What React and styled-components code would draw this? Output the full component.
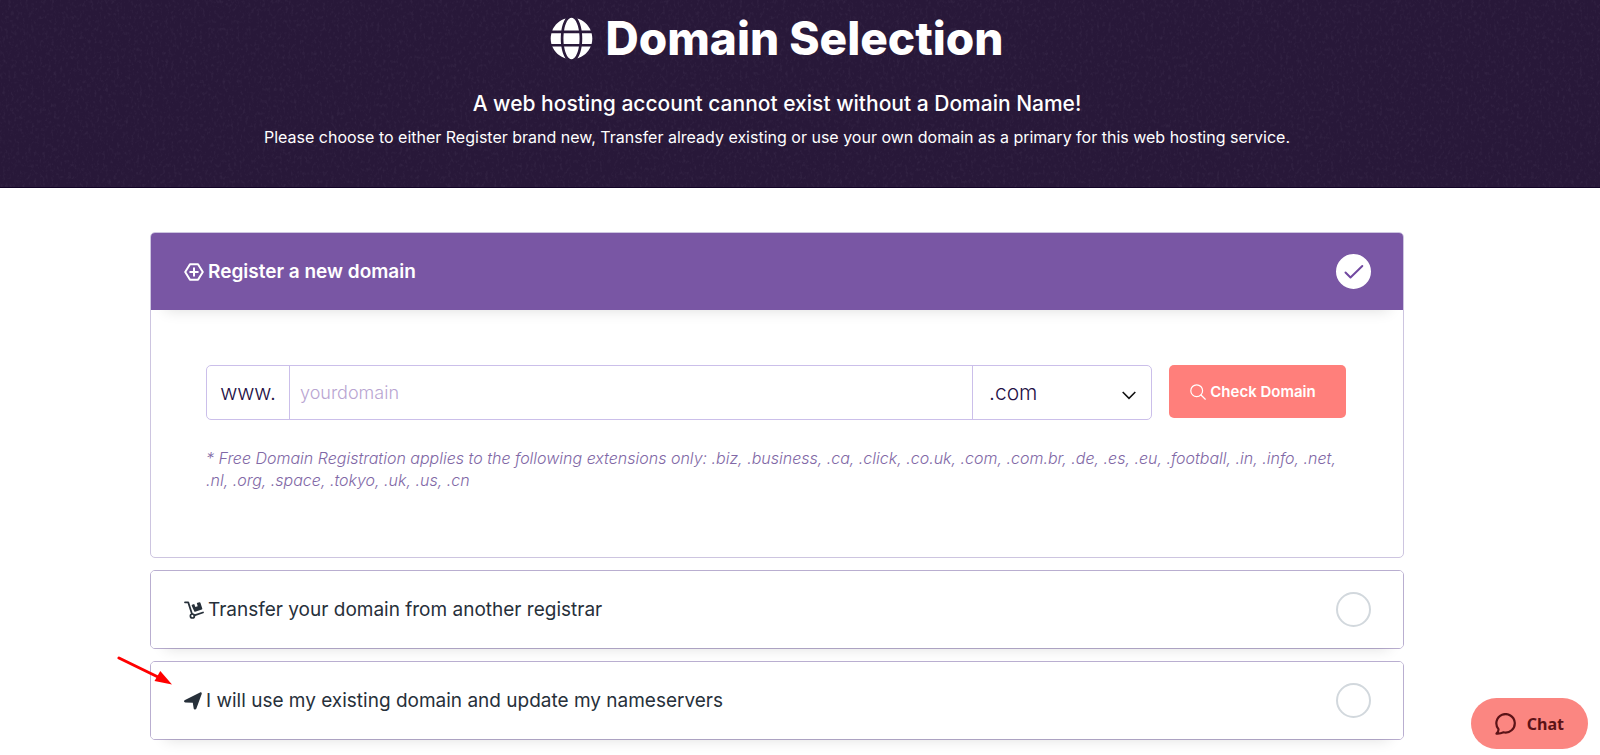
import React, { useState } from 'react'
import styled, { createGlobalStyle } from 'styled-components'
import { FaGlobe } from 'react-icons/fa'

const HexPlusIcon = () => (
  <svg width="20" height="18" viewBox="0 0 20 18" fill="none" stroke="currentColor" strokeLinejoin="round" strokeLinecap="round">
    <path d="M6 1.2h8L18.8 9 14 16.8H6L1.2 9z" strokeWidth="2" />
    <path d="M10 5.2v7.6M6.2 9h7.6" strokeWidth="2" />
  </svg>
)

const TrolleyIcon = () => (
  <svg width="20" height="18" viewBox="0 0 20 18" fill="none" stroke="currentColor" strokeLinejoin="round" strokeLinecap="round">
    <path d="M1 1.3h3.2L8 13" strokeWidth="1.8" />
    <path d="M10.4 14.4l8.6-2.9" strokeWidth="1.8" />
    <circle cx="8.4" cy="15" r="2" strokeWidth="1.7" />
    <path d="M8.1 3.7l2.1-.7 1.2 3.1 2.3-.8-.9-3.2 2.6-.8c.5-.1.9.1 1 .5l1.9 5.7c.1.5-.1.9-.5 1l-6.6 2.2c-.5.1-.9-.1-1-.5L7.700 4.700c-.1-.5 0-.9.4-1z" fill="currentColor" stroke="none" />
  </svg>
)

const PlaneIcon = () => (
  <svg width="18" height="18" viewBox="0 0 18 18" fill="currentColor">
    <path d="M1 8.100L16 .5c1-.5 2 .4 1.700 1.500L12.400 16.600c-.5 1.400-2.400 1.300-2.700-.1l-.9-5.800-7.500-.3C-.2 10.300-.4 8.700 1 8.100z" />
  </svg>
)

const SearchIcon = () => (
  <svg width="16" height="16" viewBox="0 0 16 16" fill="none" stroke="currentColor" strokeWidth="1.2" strokeLinecap="round">
    <circle cx="6.700" cy="6.700" r="5.900" />
    <path d="M11 11l4.300 4.200" />
  </svg>
)

const ChatIcon = () => (
  <svg width="22" height="22" viewBox="0 0 22 22" fill="none" stroke="currentColor" strokeWidth="2.2" strokeLinecap="round" strokeLinejoin="round">
    <path d="M1.500 20.600c1.700-1.600 2.100-2.600 2-4.400A9.200 9.200 0 1 1 8.600 19.300c-2.400 1.100-4.600 1.500-7.100 1.300z" />
  </svg>
)

const OPTIONS = [
  { key: 'register', label: 'Register a new domain', icon: <HexPlusIcon /> },
  { key: 'transfer', label: 'Transfer your domain from another registrar', icon: <TrolleyIcon /> },
  { key: 'existing', label: 'I will use my existing domain and update my nameservers', icon: <PlaneIcon /> },
]

const RegisterForm = () => (
  <StyledForm onSubmit={(e) => e.preventDefault()}>
    <FormRow>
      <InputGroup>
        <Prefix htmlFor="domain">www.</Prefix>
        <DomainInput id="domain" placeholder="yourdomain" />
        <SelectBox>
          <select aria-label="Extension" defaultValue=".com">
            <option>.com</option>
            <option>.net</option>
            <option>.org</option>
          </select>
          <svg width="14" height="9" viewBox="0 0 14 9" fill="none" stroke="#111" strokeWidth="1.6">
            <path d="M.7 1l6.300 6.300L13.300 1" />
          </svg>
        </SelectBox>
      </InputGroup>
      <CheckButton type="submit">
        <SearchIcon />
        Check Domain
      </CheckButton>
    </FormRow>
    <Note>
      * Free Domain Registration applies to the following extensions only: .biz, .business, .ca, .click,
      .co.uk, .com, .com.br, .de, .es, .eu, .football, .in, .info, .net, .nl, .org, .space, .tokyo, .uk,
      .us, .cn
    </Note>
  </StyledForm>
)

export default () => {
  const [selected, setSelected] = useState('register')

  return (
    <>
      <GlobalStyle />
      <Banner>
        <Texture aria-hidden="true">
          <filter id="grain">
            <feTurbulence type="fractalNoise" baseFrequency="0.35 0.25" numOctaves="3" seed="4" />
            <feColorMatrix values="0 0 0 0 0.6  0 0 0 0 0.55  0 0 0 0 0.7  1.6 0 0 0 -0.8" />
          </filter>
          <rect width="100%" height="100%" filter="url(#grain)" />
        </Texture>
        <Title>
          <FaGlobe size={43} />
          Domain Selection
        </Title>
        <Subtitle>A web hosting account cannot exist without a Domain Name!</Subtitle>
        <Lead>
          Please choose to either Register brand new, Transfer already existing or use your own domain as a
          primary for this web hosting service.
        </Lead>
      </Banner>
      <Options>
        {OPTIONS.map(({ key, label, icon }) => (
          <Card key={key} $open={selected === key}>
            <CardHead $active={selected === key}>
              {icon}
              <span>{label}</span>
              <RadioBox>
                <Radio
                  type="radio"
                  name="domain-option"
                  checked={selected === key}
                  onChange={() => setSelected(key)}
                />
                {selected === key && (
                  <svg width="20" height="16" viewBox="0 0 20 16" fill="none" stroke="#7148a0" strokeWidth="2" strokeLinecap="round" strokeLinejoin="round">
                    <path d="M1.500 8.500l5 5L18.300 2" />
                  </svg>
                )}
              </RadioBox>
            </CardHead>
            {selected === key && key === 'register' && <RegisterForm />}
            {key === 'existing' && (
              <Pointer width="56" height="30" viewBox="0 0 56 30" aria-hidden="true">
                <path d="M2 2l39 19" stroke="#f00" strokeWidth="3" strokeLinecap="round" />
                <path d="M55 28.500L37.500 25l5.800-10z" fill="#f00" />
              </Pointer>
            )}
          </Card>
        ))}
      </Options>
      <ChatButton type="button">
        <ChatIcon />
        Chat
      </ChatButton>
    </>
  )
}

const GlobalStyle = createGlobalStyle`
  * {
    box-sizing: border-box;
  }
  body {
    margin: 0;
    background: #fff;
    font-family: Inter, sans-serif;
    color: #212b36;
  }
  button, input, select {
    font-family: inherit;
  }
`

const Banner = styled.header`
  position: relative;
  display: flex;
  flex-direction: column;
  align-items: center;
  padding: 11px 196px 38px 150px;
  background: #281839;
  border-bottom: 1px solid #120326;
  color: #fff;
  text-align: center;
`

const Texture = styled.svg`
  position: absolute;
  inset: 0;
  width: 100%;
  height: 100%;
  opacity: 0.1;
`

const Title = styled.h1`
  position: relative;
  display: flex;
  align-items: center;
  gap: 12px;
  margin: 0 0 25px;
  font-size: 46px;
  line-height: 54px;
  font-weight: 800;
  white-space: nowrap;
`

const Subtitle = styled.h2`
  position: relative;
  margin: 0 0 7px;
  font-size: 21px;
  line-height: 28px;
  font-weight: 500;
`

const Lead = styled.p`
  position: relative;
  margin: 0;
  font-size: 16px;
  line-height: 24px;
`

const Options = styled.main`
  display: flex;
  flex-direction: column;
  gap: 12px;
  padding: 44px 196px 15px 150px;
`

const Card = styled.section`
  position: relative;
  border: 1px solid ${(p) => (p.$open ? '#cdc5e0' : '#b9aed0')};
  border-radius: 5px;
`

const CardHead = styled.label`
  display: flex;
  align-items: center;
  gap: 4px;
  height: 77px;
  padding: 0 32px 0 33px;
  border-radius: ${(p) => (p.$active ? '4px 4px 0 0' : '4px')};
  background: ${(p) => (p.$active ? '#7956a4' : '#fff')};
  box-shadow: 0 14px 14px -14px rgba(0, 0, 0, 0.14);
  color: ${(p) => (p.$active ? '#fff' : '#27303a')};
  font-size: 19px;
  line-height: 24px;
  font-weight: ${(p) => (p.$active ? 600 : 400)};
  cursor: pointer;
  span:first-of-type {
    flex: 1;
  }
`

const RadioBox = styled.span`
  display: grid;
  place-items: center;
  > * {
    grid-area: 1 / 1;
  }
`

const Radio = styled.input`
  appearance: none;
  width: 35px;
  height: 35px;
  margin: 0;
  border: 2px solid #d2d8dd;
  border-radius: 50%;
  background: #fff;
  &:checked {
    border-color: #fff;
  }
`

const StyledForm = styled.form`
  padding: 55px 42px 66px 55px;
`

const FormRow = styled.div`
  display: flex;
  align-items: flex-start;
  gap: 17px;
  margin-right: 15px;
`

const InputGroup = styled.div`
  flex: 1;
  display: flex;
  height: 55px;
  border: 1px solid #cbbfea;
  border-radius: 5px;
  color: #241046;
`

const Prefix = styled.label`
  display: flex;
  align-items: center;
  justify-content: center;
  width: 83px;
  border-right: 1px solid #cbbfea;
  font-size: 21px;
  font-weight: 300;
`

const DomainInput = styled.input`
  flex: 1;
  min-width: 0;
  padding: 0 10px;
  border: 0;
  background: transparent;
  font-size: 18px;
  font-weight: 300;
  outline: none;
  &::placeholder {
    color: #b9a5d2;
  }
`

const SelectBox = styled.div`
  position: relative;
  width: 179px;
  border-left: 1px solid #cbbfea;
  select {
    appearance: none;
    width: 100%;
    height: 100%;
    padding: 0 16px;
    border: 0;
    background: transparent;
    color: #241046;
    font-size: 21px;
    font-weight: 300;
    outline: none;
  }
  svg {
    position: absolute;
    top: 25px;
    right: 15px;
    pointer-events: none;
  }
`

const CheckButton = styled.button`
  display: flex;
  align-items: center;
  justify-content: center;
  gap: 4px;
  width: 177px;
  height: 53px;
  padding: 0 9px 0 0;
  border: 0;
  border-radius: 5px;
  background: #ff7f7b;
  color: #fff;
  font-size: 15px;
  font-weight: 600;
`

const Note = styled.p`
  margin: 27px 0 0;
  color: #8168a6;
  font-size: 16px;
  line-height: 22px;
  font-style: italic;
  font-weight: 300;
`

/* hand-drawn arrow that hangs over the card's top left corner */
const Pointer = styled.svg`
  position: absolute;
  top: -6px;
  left: -34px;
`

const ChatButton = styled.button`
  position: fixed;
  right: 12px;
  bottom: 6px;
  display: flex;
  align-items: center;
  gap: 10px;
  height: 51px;
  padding: 0 24px;
  border: 0;
  border-radius: 26px;
  background: #fb8681;
  color: #5b1317;
  && {
    font-family: 'Noto Sans', sans-serif;
  }
  font-size: 16px;
  font-weight: 700;
`
